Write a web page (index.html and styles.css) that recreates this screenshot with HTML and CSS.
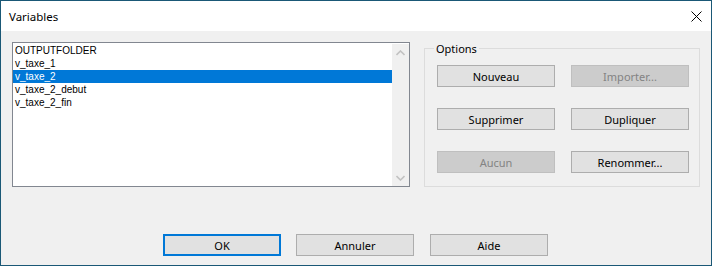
FILE: index.html
```html
<!DOCTYPE html>
<html lang="fr">
<head>
<meta charset="UTF-8">
<title>Variables</title>
<link rel="stylesheet" href="styles.css">
</head>
<body>
    <div class="dialog">
        <div class="titlebar">
            <span class="title">Variables</span>
            <span class="close">
                <svg width="11" height="11" viewBox="0 0 11 11"><path d="M0.5 0.5 L10.5 10.5 M10.5 0.5 L0.5 10.5" stroke="#000" stroke-width="1"/></svg>
            </span>
        </div>
        <div class="body">
            <div class="main">
                <div class="listbox">
                    <ul class="items">
                        <li>OUTPUTFOLDER</li>
                        <li>v_taxe_1</li>
                        <li class="selected">v_taxe_2</li>
                        <li>v_taxe_2_debut</li>
                        <li>v_taxe_2_fin</li>
                    </ul>
                    <div class="scrollbar">
                        <svg width="9" height="6" viewBox="0 0 9 6"><path d="M0.5 5 L4.5 1 L8.5 5" fill="none" stroke="#c2c2c2" stroke-width="1.6"/></svg>
                        <svg width="9" height="6" viewBox="0 0 9 6"><path d="M0.5 1 L4.5 5 L8.5 1" fill="none" stroke="#c2c2c2" stroke-width="1.6"/></svg>
                    </div>
                </div>
                <fieldset class="options">
                    <legend>Options</legend>
                    <div class="grid">
                        <button class="btn">Nouveau</button>
                        <button class="btn" disabled>Importer...</button>
                        <button class="btn">Supprimer</button>
                        <button class="btn">Dupliquer</button>
                        <button class="btn" disabled>Aucun</button>
                        <button class="btn">Renommer...</button>
                    </div>
                </fieldset>
            </div>
            <div class="footer">
                <button class="btn default">OK</button>
                <button class="btn">Annuler</button>
                <button class="btn">Aide</button>
            </div>
        </div>
    </div>
</body>
</html>
```

FILE: styles.css
```css
body {
    margin: 0;
    font-family: "Noto Sans", "Liberation Sans", sans-serif;
}
.dialog {
    width: 712px;
    height: 266px;
    box-sizing: border-box;
    border: 1px solid #1a5876;
    background-color: #f0f0f0;
}
.titlebar {
    height: 30px;
    background-color: #fff;
    display: flex;
    align-items: center;
    justify-content: space-between;
    padding-left: 8px;
}
.title {
    font-size: 11.5px;
    color: #000;
}
.close {
    width: 30px;
    display: flex;
    justify-content: center;
    align-items: center;
    height: 30px;
}
.body {
    padding: 11px 0 0 11px;
}
.main {
    display: flex;
}
.listbox {
    width: 398px;
    height: 145px;
    box-sizing: border-box;
    border: 1px solid #828790;
    background-color: #fff;
    display: flex;
}
.items {
    flex: 1;
    list-style: none;
    margin: 0;
    padding: 1px 0 0 0;
    font-family: "Liberation Sans", Arial, sans-serif;
    font-size: 10px;
}
.items li {
    height: 13px;
    line-height: 13px;
    padding-left: 2px;
    color: #000;
}
.items li.selected {
    background-color: #0078d7;
    color: #fff;
}
.scrollbar {
    width: 17px;
    margin-top: 1px;
    background-color: #f0f0f0;
    display: flex;
    flex-direction: column;
    justify-content: space-between;
    align-items: center;
    padding: 6px 0 5px;
    box-sizing: border-box;
}
.options {
    width: 276px;
    box-sizing: border-box;
    margin: 0 0 0 14px;
    padding: 0;
    border: 1px solid #dcdcdc;
    min-width: 0;
}
.options legend {
    margin-left: 9px;
    padding: 0 2px;
    font-size: 11px;
    line-height: 13px;
    color: #000;
}
.grid {
    display: grid;
    grid-template-columns: 118px 118px;
    column-gap: 16px;
    row-gap: 21px;
    padding: 10px 0 0 12px;
}
.btn {
    width: 118px;
    height: 22px;
    box-sizing: border-box;
    border: 1px solid #adadad;
    background-color: #e1e1e1;
    font-family: "Noto Sans", "Liberation Sans", sans-serif;
    font-size: 11px;
    font-weight: 400;
    color: #000;
    padding: 0;
    margin: 0;
}
.btn:disabled {
    background-color: #cccccc;
    border-color: #bfbfbf;
    color: #838383;
}
.btn.default {
    border: 2px solid #0078d7;
}
.footer {
    display: flex;
    gap: 15px;
    margin-top: 47px;
    padding-left: 151px;
}
.footer .btn:last-child {
    margin-left: 1px;
}
```
